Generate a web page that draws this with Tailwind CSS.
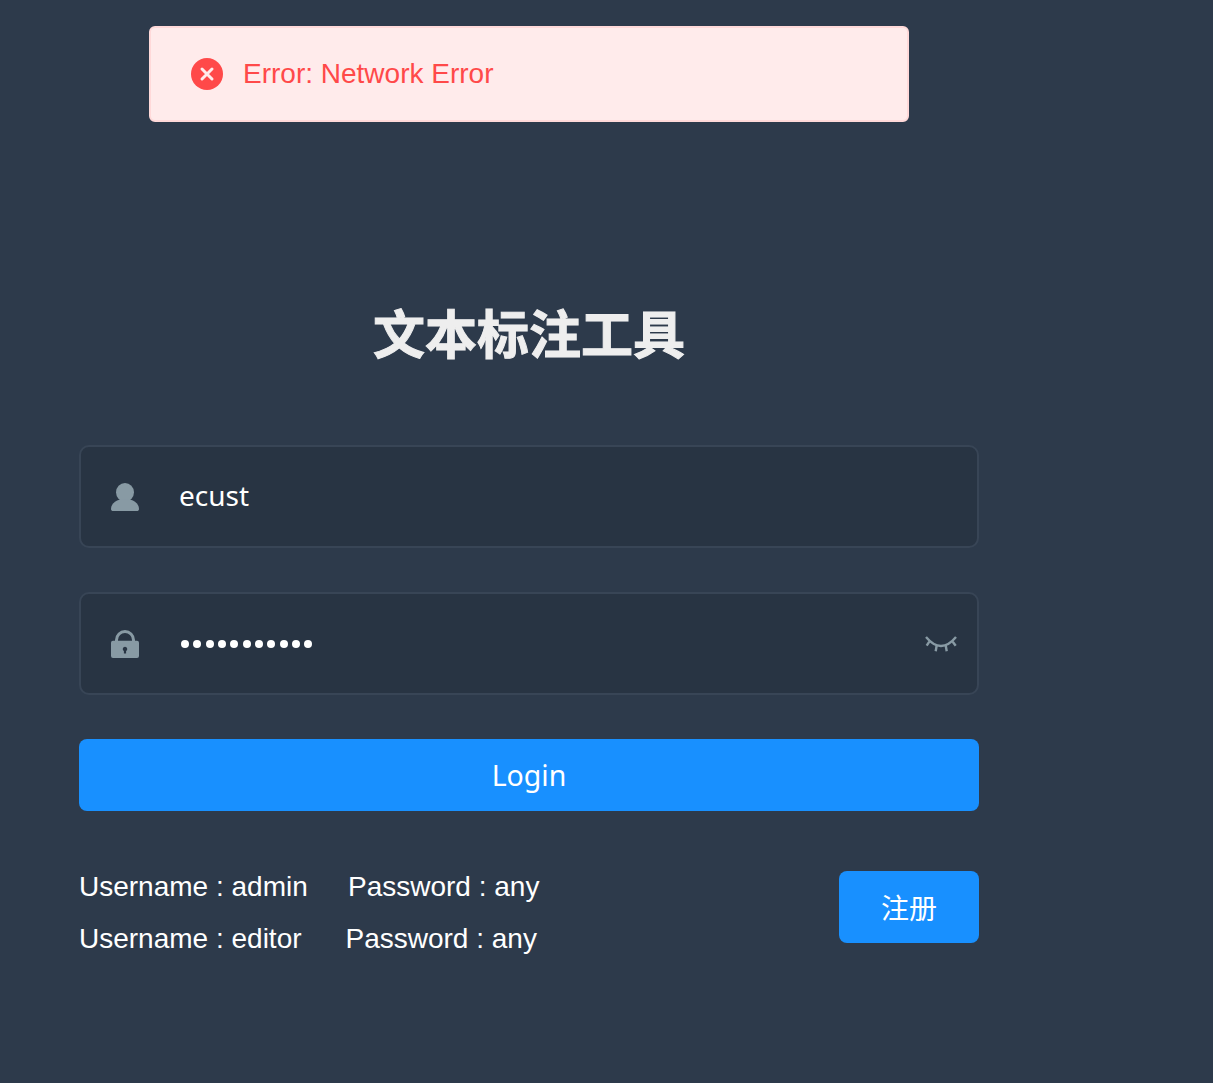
<!DOCTYPE html>
<html lang="zh-CN">
  <head>
    <meta charset="UTF-8" />
    <meta name="viewport" content="width=device-width, initial-scale=1" />
    <title>文本标注工具</title>
    <script src="https://cdn.jsdelivr.net/npm/@tailwindcss/browser@4"></script>
  </head>
  <body class="min-h-screen bg-[#2d3a4b] font-['Liberation_Sans',sans-serif]">
    <!-- error toast -->
    <div class="absolute left-[149px] top-[26px] flex h-[96px] w-[760px] items-center rounded-[6px] border-2 border-[#ffd9d9] bg-[#ffebeb] pl-[40px]">
      <svg class="h-[32px] w-[32px] shrink-0" viewBox="0 0 32 32">
        <circle cx="16" cy="16" r="16" fill="#ff4949" />
        <path d="M11 11l10 10M21 11L11 21" stroke="#ffebeb" stroke-width="3" stroke-linecap="round" fill="none" />
      </svg>
      <span class="ml-[20px] text-[28px] leading-none text-[#ff4949]">Error: Network Error</span>
    </div>

    <div class="ml-[79px] w-[900px] pt-[295px]">
      <h1 class="mb-[77px] text-center font-['Noto_Sans_CJK_SC',sans-serif] text-[52px] leading-[73px] font-bold text-[#eeeeee] [-webkit-text-stroke:1px_#eeeeee]">文本标注工具</h1>

      <div class="mb-[44px] flex h-[103px] items-center rounded-[10px] border-2 border-[#384556] bg-[#283443] font-['Noto_Sans','Noto_Sans_CJK_SC',sans-serif]">
        <svg class="ml-[30px] h-[28px] w-[28px] shrink-0" viewBox="0 0 28 28" fill="#889aa4">
          <ellipse cx="14" cy="9.300" rx="9" ry="9.300" />
          <path d="M0 26C0 20 6 16 14 16s14 4 14 10c0 1.500-1 2-2 2H2c-1 0-2-.5-2-2z" />
        </svg>
        <span class="mb-[4px] ml-[40px] text-[28px] leading-none text-white">ecust</span>
      </div>

      <div class="mb-[44px] flex h-[103px] items-center rounded-[10px] border-2 border-[#384556] bg-[#283443]">
        <svg class="ml-[30px] h-[28px] w-[28px] shrink-0" viewBox="0 0 28 28" fill="#889aa4">
          <path d="M5.500 12v-2a8.500 8.500 0 0 1 17 0v2" fill="none" stroke="#889aa4" stroke-width="3" />
          <path fill-rule="evenodd" d="M2 10.700h24a2 2 0 0 1 2 2V26a2 2 0 0 1-2 2H2a2 2 0 0 1-2-2V12.700a2 2 0 0 1 2-2zm12 6a2.300 2.300 0 0 0-1.100 4.300v2.500h2.200V21a2.300 2.300 0 0 0-1.100-4.300z" />
        </svg>
        <div class="ml-[42px] flex gap-[4.330px]">
          <span class="h-[8px] w-[8px] rounded-full bg-white"></span>
          <span class="h-[8px] w-[8px] rounded-full bg-white"></span>
          <span class="h-[8px] w-[8px] rounded-full bg-white"></span>
          <span class="h-[8px] w-[8px] rounded-full bg-white"></span>
          <span class="h-[8px] w-[8px] rounded-full bg-white"></span>
          <span class="h-[8px] w-[8px] rounded-full bg-white"></span>
          <span class="h-[8px] w-[8px] rounded-full bg-white"></span>
          <span class="h-[8px] w-[8px] rounded-full bg-white"></span>
          <span class="h-[8px] w-[8px] rounded-full bg-white"></span>
          <span class="h-[8px] w-[8px] rounded-full bg-white"></span>
          <span class="h-[8px] w-[8px] rounded-full bg-white"></span>
        </div>
        <svg class="mr-[19px] ml-auto h-[20px] w-[34px] shrink-0" viewBox="0 0 34 20" fill="none" stroke="#889aa4" stroke-width="2.400">
          <path d="M2 3Q17 21 32 3" />
          <path d="M5.300 7.700l-2.600 4M12.700 11.300l-1 6M21.700 11.300l1 6M28.700 7.700l3 4" />
        </svg>
      </div>

      <button class="mb-[60px] block h-[72px] w-full rounded-[8px] bg-[#1890ff] font-['Noto_Sans',sans-serif] text-[28.500px] text-white">Login</button>

      <div class="flex items-start justify-between">
        <div class="-mt-[10px] text-[28px] leading-[52px] text-white">
          <div class="flex"><span class="w-[269px]">Username : admin</span><span>Password : any</span></div>
          <div class="flex"><span class="w-[266.500px]">Username : editor</span><span>Password : any</span></div>
        </div>
        <button class="h-[72px] w-[140px] rounded-[8px] bg-[#1890ff] font-['Noto_Sans_CJK_SC',sans-serif] text-[28px] text-white">注册</button>
      </div>
    </div>
  </body>
</html>
